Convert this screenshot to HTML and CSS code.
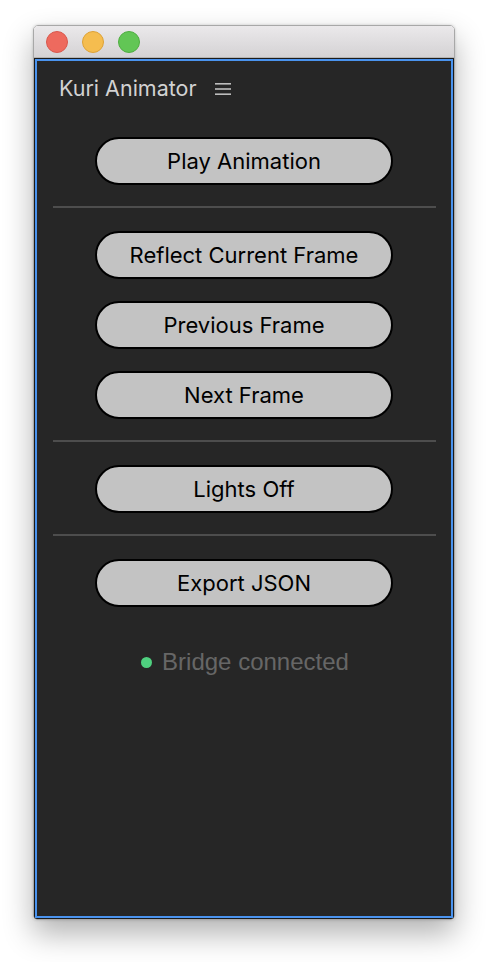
FILE: index.html
```html
<!DOCTYPE html>
<html>
<head>
<meta charset="utf-8">
<link rel="stylesheet" href="styles.css">
</head>
<body>
<div class="page">
  <div class="window">
    <div class="titlebar">
      <span class="light red"></span>
      <span class="light yellow"></span>
      <span class="light green"></span>
    </div>
    <div class="frame">
      <div class="panel">
        <div class="header">
          <span class="title">Kuri Animator</span>
          <svg class="menu" width="16" height="14" viewBox="0 0 16 14">
            <rect x="0" y="1" width="16" height="1.6" fill="#bdbdbd"/>
            <rect x="0" y="6.2" width="16" height="1.6" fill="#bdbdbd"/>
            <rect x="0" y="11.4" width="16" height="1.6" fill="#bdbdbd"/>
          </svg>
        </div>
        <button class="btn first">Play Animation</button>
        <div class="sep"></div>
        <button class="btn after-sep">Reflect Current Frame</button>
        <button class="btn">Previous Frame</button>
        <button class="btn">Next Frame</button>
        <div class="sep"></div>
        <button class="btn after-sep">Lights Off</button>
        <div class="sep"></div>
        <button class="btn after-sep">Export JSON</button>
        <div class="status">
          <span class="dot"></span>
          <span class="status-text">Bridge connected</span>
        </div>
      </div>
    </div>
  </div>
</div>
</body>
</html>
```

FILE: styles.css
```css
html, body {
  margin: 0;
  padding: 0;
  background: #ffffff;
}
.page {
  padding: 25px 0 0 33px;
  height: 962px;
  box-sizing: border-box;
}
.window {
  width: 422px;
  height: 895px;
  box-sizing: border-box;
  display: flex;
  flex-direction: column;
  border-radius: 5px 5px 4px 4px;
  overflow: hidden;
  border: 1px solid #a8a8a8;
  box-shadow: 0 14px 30px rgba(0,0,0,0.30), 0 0 3px rgba(0,0,0,0.18);
}
.titlebar {
  height: 31px;
  flex: none;
  background: linear-gradient(#ebe9eb, #d4d2d4);
  border-bottom: 1px solid #b4b4b4;
  display: flex;
  align-items: center;
  gap: 14px;
  padding-left: 12px;
}
.light {
  width: 22px;
  height: 22px;
  border-radius: 50%;
  box-sizing: border-box;
}
.red { background: #ee6a5e; border: 1px solid #d9584d; }
.yellow { background: #f5bd4f; border: 1px solid #dea236; }
.green { background: #62c655; border: 1px solid #4fae41; }
.frame {
  flex: 1;
  background: #1b1b1b;
  padding: 1px;
  display: flex;
}
.panel {
  flex: 1;
  border: 2px solid #4a93ee;
  background: #262626;
  display: flex;
  flex-direction: column;
  align-items: center;
}
.header {
  align-self: stretch;
  height: 54px;
  display: flex;
  align-items: center;
  padding-left: 22px;
  gap: 18px;
}
.title {
  font-family: "Inter", "Liberation Sans", sans-serif;
  font-size: 21.5px;
  color: #d2d2d2;
}
.menu {
  display: block;
  margin-top: 1px;
}
.btn {
  width: 298px;
  height: 48px;
  box-sizing: border-box;
  border: 2px solid #000;
  border-radius: 24px;
  background: #c3c3c3;
  color: #000;
  font-family: "Inter", "Liberation Sans", sans-serif;
  font-size: 22px;
  margin: 22px 0 0 0;
  padding: 0;
  flex: none;
}
.btn.after-sep {
  margin-top: 23px;
}
.sep {
  align-self: stretch;
  height: 2px;
  background: #4d4d4d;
  margin: 21px 15px 0 16px;
  flex: none;
}
.status {
  margin-top: 43px;
  height: 24px;
  display: flex;
  align-items: center;
  gap: 10px;
  margin-left: 2px;
}
.dot {
  width: 11px;
  height: 11px;
  border-radius: 50%;
  background: #4fd07f;
}
.status-text {
  font-family: "Liberation Sans", "Inter", sans-serif;
  font-size: 24px;
  color: #666666;
}
```
